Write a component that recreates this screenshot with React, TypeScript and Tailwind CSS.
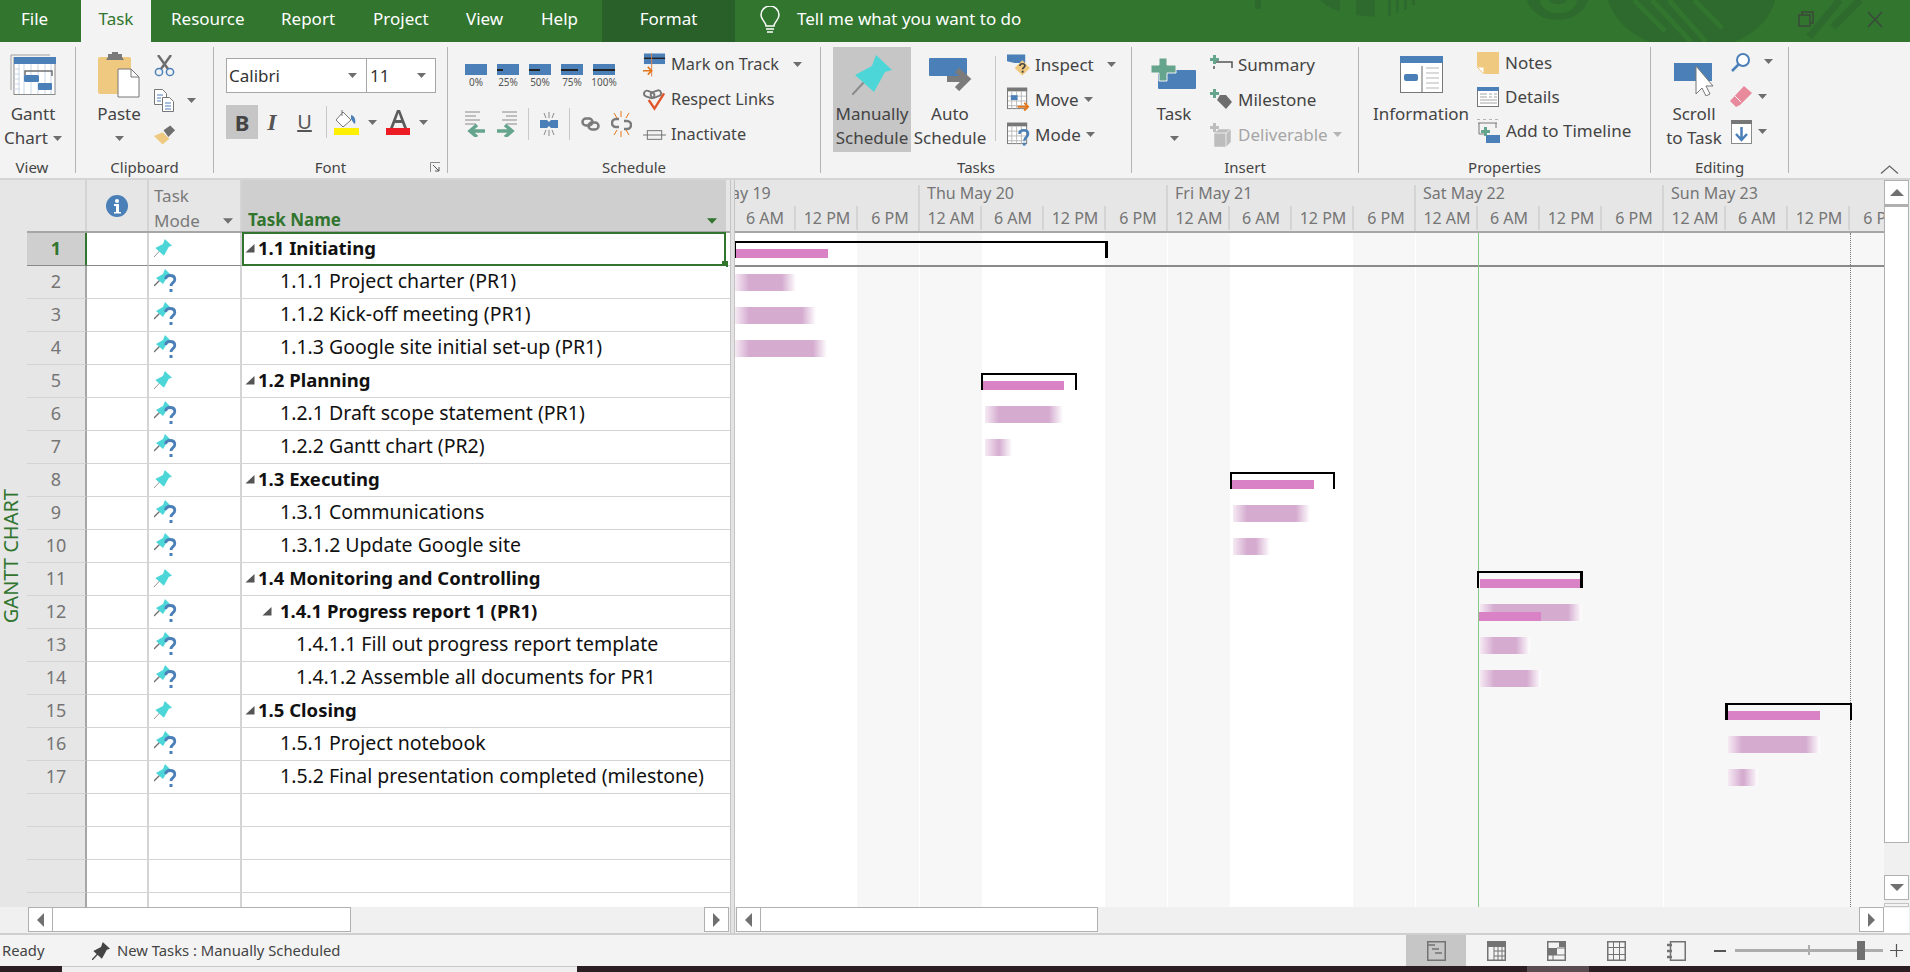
import React from 'react'

const BLUE = '#4b7fb8'
const TEAL = '#4cd6d8'
const GRAY = '#737373'
const TAN = '#efc97f'
const SAGE = '#65a48d'
const ORANGE = '#e4761a'

const TABS = [
  { label: 'Resource', w: 'w-[110px]' },
  { label: 'Report', w: 'w-[92px]' },
  { label: 'Project', w: 'w-[93px]' },
  { label: 'View', w: 'w-[75px]' },
  { label: 'Help', w: 'w-[81px]' },
]

const ROWS = [
  { id: 1, name: '1.1 Initiating', level: 1, summary: true },
  { id: 2, name: '1.1.1 Project charter (PR1)', level: 2 },
  { id: 3, name: '1.1.2 Kick-off meeting (PR1)', level: 2 },
  { id: 4, name: '1.1.3 Google site initial set-up (PR1)', level: 2 },
  { id: 5, name: '1.2 Planning', level: 1, summary: true },
  { id: 6, name: '1.2.1 Draft scope statement (PR1)', level: 2 },
  { id: 7, name: '1.2.2 Gantt chart (PR2)', level: 2 },
  { id: 8, name: '1.3 Executing', level: 1, summary: true },
  { id: 9, name: '1.3.1 Communications', level: 2 },
  { id: 10, name: '1.3.1.2 Update Google site', level: 2 },
  { id: 11, name: '1.4 Monitoring and Controlling', level: 1, summary: true },
  { id: 12, name: '1.4.1 Progress report 1 (PR1)', level: 2, summary: true },
  { id: 13, name: '1.4.1.1 Fill out progress report template', level: 3 },
  { id: 14, name: '1.4.1.2 Assemble all documents for PR1', level: 3 },
  { id: 15, name: '1.5 Closing', level: 1, summary: true },
  { id: 16, name: '1.5.1 Project notebook', level: 2 },
  { id: 17, name: '1.5.2 Final presentation completed (milestone)', level: 2 },
]

const DAYS = [
  { label: 'Wed May 19', work: [false, true, true, false] },
  { label: 'Thu May 20', work: [false, true, true, false] },
  { label: 'Fri May 21', work: [false, true, true, false] },
  { label: 'Sat May 22', work: [false, false, false, false] },
  { label: 'Sun May 23', work: [false, false, false, false] },
]
const SLOTS = ['12 AM', '6 AM', '12 PM', '6 PM']

// x values are page pixels, row is the task row the bar sits on
const BRACKETS = [
  { row: 0, x1: 735, x2: 1108, l: 1, r: 3 },
  { row: 4, x1: 981, x2: 1077, l: 2, r: 2 },
  { row: 7, x1: 1230, x2: 1335, l: 2, r: 2 },
  { row: 10, x1: 1477, x2: 1583, l: 2, r: 3 },
  { row: 14, x1: 1725, x2: 1852, l: 3, r: 2 },
]
const SOLID = [
  { row: 0, x1: 735, x2: 828 },
  { row: 4, x1: 983, x2: 1064 },
  { row: 7, x1: 1231, x2: 1314 },
  { row: 10, x1: 1480, x2: 1580 },
  { row: 14, x1: 1728, x2: 1820 },
]
const SOFT = [
  { row: 1, x1: 735, x2: 796 },
  { row: 2, x1: 735, x2: 816 },
  { row: 3, x1: 735, x2: 827 },
  { row: 5, x1: 985, x2: 1063 },
  { row: 6, x1: 985, x2: 1012 },
  { row: 8, x1: 1233, x2: 1310 },
  { row: 9, x1: 1233, x2: 1270 },
  { row: 11, x1: 1480, x2: 1582 },
  { row: 12, x1: 1480, x2: 1530 },
  { row: 13, x1: 1480, x2: 1541 },
  { row: 15, x1: 1728, x2: 1820 },
  { row: 16, x1: 1728, x2: 1758 },
]

const Arrow = ({ color = '#6e6e6e', className = '' }: { color?: string; className?: string }) => (
  <svg width="9" height="5" viewBox="0 0 9 5" className={className}>
    <path d="M0 0h9L4.500 5z" fill={color} />
  </svg>
)

const PinIcon = ({ size = 40 }: { size?: number }) => (
  <svg width={size} height={size} viewBox="0 0 40 40">
    <path d="M0 40 13 26" stroke="#8a8a8a" strokeWidth="2" fill="none" />
    <path d="M24 0 40 15 33 17 22 37 3 20 20 11z" fill={TEAL} />
  </svg>
)

const PinQuestion = () => (
  <svg width="23" height="24" viewBox="0 0 23 24">
    <path d="M0 17 6 11" stroke="#6f6f6f" strokeWidth="1.300" fill="none" />
    <path d="M11 0 17 6 14 7 9 15 2 9 9 5z" fill={TEAL} />
    <path d="M11.500 10c.5-2.500 2.500-3.500 4.500-3.500 3 0 4.800 1.600 4.800 4 0 3-3.800 3.300-3.800 6.500" stroke={BLUE} strokeWidth="2.800" fill="none" />
    <rect x="15.500" y="20" width="3" height="3" fill={BLUE} />
  </svg>
)

const GanttIcon = () => (
  <svg width="46" height="41" viewBox="0 0 46 41">
    <path d="M1 36V1h39" stroke="#a0a0a0" fill="none" />
    <rect x="4" y="3.500" width="41" height="37" fill="#fff" stroke="#8a8a8a" />
    <rect x="4" y="3" width="42" height="7" fill={BLUE} />
    <path d="M9 10v30M14 10v30M21 10v30M28 10v30M35 10v30M41 10v30M4 15h6M4 20h6M4 25h6M4 30h6M4 35h6" stroke="#c9d6e4" />
    <path d="M15 22v-5h27v5" stroke="#707070" strokeWidth="1.500" fill="none" />
    <rect x="14" y="21" width="15" height="7" rx="1.500" fill={BLUE} />
    <rect x="28" y="29" width="14" height="7" rx="1" fill={BLUE} />
  </svg>
)

const PasteIcon = () => (
  <svg width="42" height="46" viewBox="0 0 42 46">
    <rect x="0" y="5" width="33" height="37" rx="2" fill={TAN} />
    <path d="M10 5V2h4V0h6v2h4v3l2 3H8z" fill="#7a7a7a" />
    <path d="M20 17h13l8 8v20H20z" fill="#fff" stroke="#777" />
    <path d="M33 17v8h8" fill="none" stroke="#777" />
  </svg>
)

const ScissorsIcon = () => (
  <svg width="21" height="22" viewBox="0 0 21 22">
    <path d="M4 0 14 14M17 0 7 14" stroke="#6e6e6e" strokeWidth="2.500" fill="none" />
    <circle cx="5" cy="17" r="3.600" fill="none" stroke={BLUE} strokeWidth="1.500" />
    <circle cx="16" cy="17" r="3.600" fill="none" stroke={BLUE} strokeWidth="1.500" />
  </svg>
)

const CopyIcon = () => (
  <svg width="21" height="23" viewBox="0 0 21 23">
    <path d="M.5.5h8l4 4v11H.5z" fill="#fff" stroke="#777" />
    <path d="M8.500 8.500h7l4 4v10h-11z" fill="#fff" stroke="#777" />
    <path d="M3 6h6M3 9h4M3 12h4M11 14h6M11 17h6M11 20h6" stroke={BLUE} />
  </svg>
)

const BrushIcon = () => (
  <svg width="24" height="21" viewBox="0 0 24 21">
    <path d="M10 7 17 14 10 20 1 11z" fill={TAN} />
    <path d="M11 5 18 0 23 5 16 12z" fill="#6e6e6e" />
  </svg>
)

const FillIcon = () => (
  <svg width="25" height="26" viewBox="0 0 25 26">
    <path d="M9 3 17 11 9 18 2 11z" fill="#fff" stroke="#777" />
    <path d="M8 1v6" stroke="#777" />
    <path d="M17 6c4 1 5 5 4 9-2-1-3-4-4-5z" fill={BLUE} />
    <rect x="0" y="19" width="25" height="7" fill="#ffef00" />
  </svg>
)

const FontColorIcon = () => (
  <svg width="25" height="26" viewBox="0 0 25 26">
    <path d="M4 19 11 1h3l7 18h-3l-2-5H9l-2 5zM10 11h5l-2.500-7z" fill="#5c5c5c" fillRule="evenodd" />
    <rect x="0" y="19" width="24" height="7" fill="#ed1c24" />
  </svg>
)

const PercentBar = ({ fill, label }: { fill: number; label: string }) => (
  <div className="flex w-[22px] flex-col items-center">
    <div className="flex h-[11px] w-[22px] items-center bg-[#4b7fb8]">
      {fill > 0 && <div className="h-[2px] bg-[#222]" style={{ width: fill * 22 }} />}
    </div>
    <span className="mt-[1px] whitespace-nowrap text-[10px] leading-[12px] text-[#555]">{label}</span>
  </div>
)

const OutdentIcon = ({ flip }: { flip?: boolean }) => (
  <svg width="22" height="26" viewBox="0 0 22 26" style={flip ? { transform: 'scaleX(-1)' } : undefined}>
    <path d="M0 1h15M0 5h11M0 9h15M0 13h11" stroke="#8a8a8a" />
    <path d="M20 20H7M12 14l-7 6 7 6" stroke={SAGE} strokeWidth="3.500" fill="none" />
  </svg>
)

const SplitIcon = () => (
  <svg width="18" height="24" viewBox="0 0 18 24">
    <path d="M0 8h7l2 2 2-2h7v8h-7l-2-2-2 2H0z" fill={BLUE} />
    <path d="M9 0v6M4 1l2 5M14 1l-2 5M9 18v6M4 23l2-5M14 23l-2-5" stroke="#8a8a8a" />
  </svg>
)

const LinkIcon = () => (
  <svg width="19" height="14" viewBox="0 0 19 14">
    <rect x="1.500" y="1.500" width="10" height="7" rx="3.500" fill="none" stroke="#7b7b7b" strokeWidth="2.500" />
    <rect x="7.500" y="5.500" width="10" height="7" rx="3.500" fill="none" stroke="#7b7b7b" strokeWidth="2.500" />
  </svg>
)

const UnlinkIcon = () => (
  <svg width="21" height="26" viewBox="0 0 21 26">
    <path d="M8 8H5a4 4 0 0 0 0 8h3M13 10h3a4 4 0 0 1 0 8h-3" stroke="#7b7b7b" strokeWidth="2.500" fill="none" />
    <path d="M10 0v6M3 2l3 5M18 2l-3 5M10 20v6M3 24l3-5M18 24l-3-5" stroke={ORANGE} />
  </svg>
)

const MarkTrackIcon = () => (
  <svg width="24" height="24" viewBox="0 0 24 24">
    <rect x="1" y="0" width="22" height="11" fill={BLUE} />
    <path d="M1 5h22" stroke="#222" strokeWidth="1.500" />
    <path d="M9 0v24" stroke="#d98050" />
    <path d="M0 18h8M5 14l4 4-4 4" stroke={ORANGE} strokeWidth="1.800" fill="none" />
  </svg>
)

const RespectIcon = () => (
  <svg width="24" height="22" viewBox="0 0 24 22">
    <rect x="1" y="2" width="11" height="6" rx="3" fill="none" stroke="#777" strokeWidth="2" transform="rotate(20 6 5)" />
    <rect x="8" y="2" width="11" height="6" rx="3" fill="none" stroke="#777" strokeWidth="2" transform="rotate(-20 13 5)" />
    <path d="M6 11l6 9L22 4" stroke="#e0562c" strokeWidth="2.500" fill="none" />
  </svg>
)

const InactivateIcon = () => (
  <svg width="24" height="12" viewBox="0 0 24 12">
    <rect x="4.500" y="1.500" width="15" height="9" fill="none" stroke="#6e6e6e" />
    <path d="M0 6h24" stroke="#6e6e6e" />
  </svg>
)

const AutoIcon = () => (
  <svg width="43" height="33" viewBox="0 0 43 33">
    <rect x="0" y="0" width="38" height="18" rx="1" fill={BLUE} />
    <path d="M18 21h19M28 12l10 9-10 10" stroke="#7b7b7b" strokeWidth="6" fill="none" />
  </svg>
)

const InspectIcon = () => (
  <svg width="24" height="22" viewBox="0 0 24 22">
    <path d="M0 0h19v9H8L0 7z" fill={BLUE} />
    <path d="M16 6 24 14 16 22 8 14z" fill={TAN} />
    <path d="M13.500 12c0-1.500 1-2.300 2.600-2.300s2.600.8 2.600 2.200c0 1.700-2.400 1.800-2.400 3.600" stroke="#444" strokeWidth="1.800" fill="none" />
    <rect x="15.300" y="17" width="2" height="2" fill="#444" />
  </svg>
)

const CalIcon = ({ kind }: { kind: 'move' | 'mode' }) => (
  <svg width="24" height="25" viewBox="0 0 24 25">
    <rect x=".5" y="1" width="20" height="21" fill="#fff" stroke="#777" />
    <rect x="0" y="0" width="21" height="4" fill="#777" />
    <path d="M5 4v18M10 4v18M15 4v18M1 9h19M1 14h19M1 19h19" stroke="#b9b9b9" />
    {kind === 'move' ? (
      <>
        <rect x="4" y="8" width="7" height="5" fill={BLUE} />
        <path d="M11 20h11M18 16l4 4-4 4" stroke={ORANGE} strokeWidth="2" fill="none" />
      </>
    ) : (
      <>
        <path d="M13 12c0-2.500 2-4 4.500-4s4.500 1.500 4.500 4c0 3.200-4 3.500-4 7" stroke={BLUE} strokeWidth="2.600" fill="none" />
        <rect x="16.500" y="21" width="3" height="3" fill={BLUE} />
      </>
    )}
  </svg>
)

const TaskIcon = () => (
  <svg width="46" height="34" viewBox="0 0 46 34">
    <rect x="7" y="12" width="38" height="19" rx="1" fill={BLUE} />
    <path d="M8 0h8v7h9v8h-9v8H8v-8H0V7h8z" fill={SAGE} stroke="#f3f3f3" />
  </svg>
)

const SummaryIcon = () => (
  <svg width="23" height="20" viewBox="0 0 23 20">
    <path d="M3 0h3v3h3v3H6v3H3V6H0V3h3z" fill={SAGE} />
    <path d="M6 7h16v6M4 11v3" stroke="#555" strokeWidth="1.500" fill="none" />
  </svg>
)

const MilestoneIcon = () => (
  <svg width="23" height="22" viewBox="0 0 23 22">
    <path d="M10 6h6l6 7-6 7-9-9z" fill="#6e6e6e" />
    <path d="M3 0h3v3h3v3H6v3H3V6H0V3h3z" fill={SAGE} />
  </svg>
)

const DeliverableIcon = () => (
  <svg width="23" height="24" viewBox="0 0 23 24">
    <path d="M4 10h12v14H4zM16 10l5-4v13l-5 5zM4 10l5-4h12l-5 4z" fill="#bdbdbd" stroke="#f3f3f3" strokeWidth=".5" />
    <path d="M3 0h3v3h3v3H6v3H3V6H0V3h3z" fill="#bdbdbd" />
  </svg>
)

const InfoPanelIcon = () => (
  <svg width="43" height="37" viewBox="0 0 43 37">
    <rect x=".5" y=".5" width="42" height="36" fill="#fff" stroke="#777" />
    <rect x="0" y="0" width="43" height="7" fill={BLUE} />
    <rect x="4" y="18" width="14" height="7" rx="2" fill={BLUE} />
    <path d="M22 10v26" stroke="#666" />
    <path d="M26 12h13M26 17h13M26 22h13M26 27h13M26 32h13" stroke="#b5b5b5" />
  </svg>
)

const NotesIcon = () => (
  <svg width="22" height="22" viewBox="0 0 22 22">
    <path d="M0 0h22v22H8l-8-8z" fill={TAN} />
    <path d="M0 15h7v7z" fill="#fff" stroke={TAN} />
  </svg>
)

const DetailsIcon = () => (
  <svg width="22" height="20" viewBox="0 0 22 20">
    <rect x=".5" y=".5" width="21" height="19" fill="#fff" stroke="#777" />
    <rect x="0" y="0" width="22" height="4" fill={BLUE} />
    <path d="M3 7h7M12 7h3M17 7h3M3 10h7M12 10h3M17 10h3M3 13h17M3 16h17" stroke="#a5a5a5" />
  </svg>
)

const TimelineIcon = () => (
  <svg width="23" height="24" viewBox="0 0 23 24">
    <path d="M0 0h3M6 0h3M12 0h3M18 0h3M1 4h19M2 4v11h8M19 4v5" stroke="#777" fill="none" />
    <rect x="9" y="16" width="14" height="8" fill={BLUE} />
    <path d="M7 8h3v3h3v3h-3v3H7v-3H4v-3h3z" fill={SAGE} />
  </svg>
)

const ScrollTaskIcon = () => (
  <svg width="40" height="42" viewBox="0 0 40 42">
    <rect x="0" y="9" width="38" height="18" fill={BLUE} />
    <path d="M22 12v28l6-6 4 8 4-2-4-8h7z" fill="#fff" stroke="#777" />
  </svg>
)

const SearchIcon = () => (
  <svg width="20" height="20" viewBox="0 0 20 20">
    <circle cx="12" cy="8" r="6" fill="#fff" stroke={BLUE} strokeWidth="2" />
    <path d="M7.500 12.500 1 19" stroke={BLUE} strokeWidth="2.500" />
  </svg>
)

const EraserIcon = () => (
  <svg width="22" height="21" viewBox="0 0 22 21">
    <path d="M14 0 22 7 10 19 6 21 0 15z" fill="#e88a9c" />
    <path d="M5 10 11 16" stroke="#f3f3f3" />
  </svg>
)

const FillDownIcon = () => (
  <svg width="21" height="24" viewBox="0 0 21 24">
    <rect x=".5" y=".5" width="20" height="23" fill="#fff" stroke="#8a8a8a" />
    <rect x="0" y="0" width="21" height="4" fill="#777" />
    <path d="M10.500 7v13M5 14l5.500 6 5.500-6" stroke={BLUE} strokeWidth="2.500" fill="none" />
  </svg>
)

const Sep = () => <div className="h-[126px] w-px shrink-0 bg-[#b4b4b4]" />

const BigButton = ({
  w,
  icon,
  lines,
  arrow,
  active,
  className = '',
}: {
  w: string
  icon: React.ReactNode
  lines: string[]
  arrow?: boolean
  active?: boolean
  className?: string
}) => (
  <div className={`flex h-[105px] shrink-0 flex-col items-center ${w} ${active ? 'bg-[#c6c6c6]' : ''} ${className}`}>
    <div className="flex h-[55px] items-center justify-center">{icon}</div>
    {lines.map((line) => (
      <div key={line} className="flex h-[24px] items-center gap-[5px] whitespace-nowrap leading-[24px]">
        {line}
        {arrow && line === lines[lines.length - 1] && lines.length > 1 && <Arrow />}
      </div>
    ))}
    {arrow && lines.length === 1 && (
      <div className="flex h-[24px] items-center">
        <Arrow />
      </div>
    )}
  </div>
)

const SmallRow = ({
  icon,
  label,
  arrow,
  muted,
  gap = 'gap-[5px]',
  iconW = 'w-[23px]',
}: {
  icon: React.ReactNode
  label?: string
  arrow?: 'tail' | 'end'
  muted?: boolean
  gap?: string
  iconW?: string
}) => (
  <div className={`flex h-[35px] items-center whitespace-nowrap ${gap} ${muted ? 'text-[#a6a6a6]' : ''}`}>
    <div className={`flex shrink-0 items-center justify-center ${iconW}`}>{icon}</div>
    {label}
    {arrow === 'tail' && <Arrow color={muted ? '#b5b5b5' : '#6e6e6e'} />}
    {arrow === 'end' && <Arrow className="ml-auto" />}
  </div>
)

const Group = ({
  w,
  label,
  children,
  launcher,
  labelClass = '',
}: {
  w: string
  label: string
  children: React.ReactNode
  launcher?: boolean
  labelClass?: string
}) => (
  <div className={`flex shrink-0 flex-col ${w}`}>
    <div className="flex h-[112px]">{children}</div>
    <div className={`relative flex h-[17px] items-center justify-center text-[15px] leading-[17px] ${labelClass}`}>
      {label}
      {launcher && (
        <svg width="11" height="11" viewBox="0 0 11 11" className="absolute right-[6px] top-[3px]">
          <path d="M.5 10V.5H10" stroke="#8a8a8a" fill="none" />
          <path d="M3 3l6 6M9 5v4H5" stroke="#555" fill="none" />
        </svg>
      )}
    </div>
  </div>
)

const TitleBar = () => (
  <div className="relative flex h-[42px] shrink-0 items-center bg-[#31752f] text-[17px] text-white">
    <svg className="absolute right-0 top-0" width="710" height="42" viewBox="1200 0 710 42">
      <g fill="#2e6a2d">
        <rect x="1255" y="0" width="6" height="9" />
        <path d="M1320 0h20v11c-8-2-15-6-20-11z" />
        <path d="M1356 0h19v17l-19-2z" />
        <rect x="1388" y="0" width="3" height="16" />
        <rect x="1396" y="0" width="2.500" height="13" />
        <rect x="1404" y="0" width="3" height="10" />
        <rect x="1412" y="0" width="3" height="5" />
        <path d="M1527 0a31 24 0 0 0 61 0h-11a18 13 0 0 1-37 0z" />
        <path d="M1549 0a9 4 0 0 0 18 0z" />
        <path d="M1608 0c6 20 22 34 42 42h84c20-8 36-22 41-42z" />
      </g>
      <g stroke="#31752f" strokeWidth="5" fill="none">
        <path d="M1634 0l31 31M1652 0l39 42M1669 0l37 42M1694 0l28 28" />
      </g>
      <path d="M1840 0l-31 37M1860 0l-27 27" stroke="#2e6a2d" strokeWidth="7" fill="none" />
      <g stroke="#3b4a3a" strokeWidth="1.500" fill="none">
        <rect x="1799" y="15" width="11" height="11" />
        <path d="M1802 15v-3h11v11h-3" />
        <path d="M1868 12l14 15M1882 12l-14 15" />
      </g>
    </svg>
    <div className="relative flex h-full items-center">
      <div className="w-[81px] pb-[5px] pl-[21px]">File</div>
      <div className="flex h-full w-[70px] items-center justify-center bg-[#f3f3f3] pb-[5px] text-[#31752f]">Task</div>
      {TABS.map((tab) => (
        <div key={tab.label} className={`${tab.w} pb-[5px] pl-[20px]`}>{tab.label}</div>
      ))}
      <div className="flex h-full w-[133px] items-center justify-center bg-[#29602a] pb-[5px]">Format</div>
      <svg width="20" height="30" viewBox="0 0 20 30" className="ml-[25px]">
        <path d="M6 20c0-4-5-6-5-11a9 9 0 0 1 18 0c0 5-5 7-5 11z" fill="none" stroke="#fff" strokeWidth="1.500" />
        <path d="M6 23h8M7 26h6" stroke="#fff" strokeWidth="1.500" />
      </svg>
      <div className="ml-[17px] pb-[5px]">Tell me what you want to do</div>
    </div>
  </div>
)

const Ribbon = () => (
  <div className="flex h-[138px] shrink-0 items-start border-b-2 border-[#d4d4d4] bg-[#f3f3f3] pt-[5px] text-[17px] text-[#444]">
    <Group w="w-[75px]" label="View" labelClass="pr-[11px]">
      <BigButton w="w-[66px]" icon={<GanttIcon />} lines={['Gantt', 'Chart']} arrow />
    </Group>
    <Sep />
    <Group w="w-[137px]" label="Clipboard">
      <BigButton w="w-[62px]" className="ml-[12px]" icon={<PasteIcon />} lines={['Paste']} arrow />
      <div className="ml-[3px] flex w-[50px] flex-col pt-[1px]">
        <SmallRow icon={<ScissorsIcon />} />
        <SmallRow icon={<CopyIcon />} arrow="tail" gap="gap-[11px]" />
        <SmallRow icon={<BrushIcon />} />
      </div>
    </Group>
    <Sep />
    <Group w="w-[233px]" label="Font" launcher>
      <div className="flex flex-col pl-[12px] pt-[11px]">
        <div className="flex h-[35px]">
          <div className="flex w-[141px] items-center justify-between border border-[#a6a6a6] bg-white pl-[2px] pr-[9px] text-[#333]">
            Calibri
            <Arrow />
          </div>
          <div className="flex w-[69px] items-center justify-between border border-l-0 border-[#a6a6a6] bg-white pl-[3px] pr-[9px] text-[#333]">
            11
            <Arrow />
          </div>
        </div>
        <div className="mt-[12px] flex h-[34px] items-center">
          <div className="flex h-full w-[32px] items-center justify-center bg-[#c6c6c6] text-[22px] font-bold leading-none text-[#444]">B</div>
          <div className="w-[28px] text-center font-['Liberation_Serif',serif] text-[24px] font-bold italic leading-none text-[#555]">I</div>
          <div className="w-[37px] text-center text-[20px] leading-none text-[#555] underline">U</div>
          <div className="ml-[3px] h-[32px] w-px bg-[#c8c8c8]" />
          <div className="ml-[7px]"><FillIcon /></div>
          <Arrow className="ml-[9px]" />
          <div className="ml-[9px]"><FontColorIcon /></div>
          <Arrow className="ml-[8px]" />
        </div>
      </div>
    </Group>
    <Sep />
    <Group w="w-[372px]" label="Schedule">
      <div className="flex w-[195px] shrink-0 flex-col pl-[17px] pt-[17px]">
        <div className="flex h-[36px] gap-[10px]">
          <PercentBar fill={0} label="0%" />
          <PercentBar fill={0.25} label="25%" />
          <PercentBar fill={0.5} label="50%" />
          <PercentBar fill={0.75} label="75%" />
          <PercentBar fill={1} label="100%" />
        </div>
        <div className="mt-[8px] flex items-center">
          <OutdentIcon />
          <div className="ml-[8px]"><OutdentIcon flip /></div>
          <div className="mx-[11px] h-[32px] w-px bg-[#c8c8c8]" />
          <SplitIcon />
          <div className="mx-[11px] h-[32px] w-px bg-[#c8c8c8]" />
          <LinkIcon />
          <div className="ml-[11px]"><UnlinkIcon /></div>
        </div>
      </div>
      <div className="flex w-[172px] flex-col pr-[13px] text-[16.3px]">
        <SmallRow icon={<MarkTrackIcon />} label="Mark on Track" arrow="end" />
        <SmallRow icon={<RespectIcon />} label="Respect Links" />
        <SmallRow icon={<InactivateIcon />} label="Inactivate" />
      </div>
    </Group>
    <Sep />
    <Group w="w-[310px]" label="Tasks">
      <BigButton w="w-[78px]" className="ml-[12px]" icon={<PinIcon />} lines={['Manually', 'Schedule']} active />
      <BigButton w="w-[78px]" icon={<AutoIcon />} lines={['Auto', 'Schedule']} />
      <div className="ml-[6px] mt-[9px] h-[85px] w-px bg-[#c8c8c8]" />
      <div className="ml-[11px] flex w-[112px] flex-col pr-[3px]">
        <SmallRow icon={<InspectIcon />} label="Inspect" arrow="end" />
        <SmallRow icon={<CalIcon kind="move" />} label="Move" arrow="tail" />
        <SmallRow icon={<CalIcon kind="mode" />} label="Mode" arrow="tail" />
      </div>
    </Group>
    <Sep />
    <Group w="w-[226px]" label="Insert">
      <BigButton w="w-[60px]" className="ml-[12px]" icon={<TaskIcon />} lines={['Task']} arrow />
      <div className="ml-[6px] flex flex-col">
        <SmallRow icon={<SummaryIcon />} label="Summary" />
        <SmallRow icon={<MilestoneIcon />} label="Milestone" />
        <SmallRow icon={<DeliverableIcon />} label="Deliverable" arrow="tail" muted />
      </div>
    </Group>
    <Sep />
    <Group w="w-[291px]" label="Properties">
      <BigButton w="w-[110px]" className="ml-[7px]" icon={<InfoPanelIcon />} lines={['Information']} />
      <div className="-mt-[2px] ml-[1px] flex flex-col">
        <div className="flex h-[35px] items-center gap-[6px] pt-[1px]"><NotesIcon />Notes</div>
        <div className="flex h-[34px] items-center gap-[6px]"><DetailsIcon />Details</div>
        <div className="flex h-[34px] items-center gap-[6px] whitespace-nowrap"><TimelineIcon />Add to Timeline</div>
      </div>
    </Group>
    <Sep />
    <Group w="w-[137px]" label="Editing">
      <BigButton w="w-[72px]" className="ml-[7px]" icon={<ScrollTaskIcon />} lines={['Scroll', 'to Task']} />
      <div className="-mt-[3px] flex flex-col">
        <SmallRow icon={<SearchIcon />} arrow="tail" iconW="w-[22px]" gap="gap-[12px]" />
        <SmallRow icon={<EraserIcon />} arrow="tail" iconW="w-[22px]" gap="gap-[6px]" />
        <SmallRow icon={<FillDownIcon />} arrow="tail" iconW="w-[22px]" gap="gap-[6px]" />
      </div>
    </Group>
    <Sep />
    <div className="flex h-[130px] flex-1 items-end justify-end pb-[3px] pr-[11px]">
      <svg width="19" height="9" viewBox="0 0 19 9">
        <path d="M1 8.500 9.500 1 18 8.500" stroke="#666" strokeWidth="1.300" fill="none" />
      </svg>
    </div>
  </div>
)

const Triangle = () => (
  <svg width="10" height="10" viewBox="0 0 10 10" className="shrink-0">
    <path d="M9.500 1v8.500H.5z" fill="#555" />
  </svg>
)

const TaskRow = ({ id, name, level, summary }: { id?: number; name?: string; level?: number; summary?: boolean }) => {
  const selected = id === 1
  let pad = ''
  if (level === 1) pad = selected ? 'gap-[3px] pl-[1px]' : 'gap-[3px] pl-[3px]'
  if (level === 2) pad = summary ? 'gap-[8px] pl-[20px]' : 'pl-[38px]'
  if (level === 3) pad = 'pl-[54px]'
  return (
    <div className="flex h-[33px] shrink-0">
      <div
        className={`flex w-[60px] shrink-0 items-center justify-center border-b border-r-2 pb-[2px] text-[18px] ${
          selected ? 'border-b-[#8a8a8a] border-r-[#31752f] bg-[#cfcfcf] font-bold text-[#31752f]' : 'border-b-[#d4d4d4] border-r-[#a6a6a6] text-[#757575]'
        }`}
      >
        {id}
      </div>
      <div className={`w-[62px] shrink-0 border-b border-r-2 border-r-[#d4d4d4] bg-white ${selected ? 'border-b-[#8a8a8a]' : 'border-b-[#d4d4d4]'}`} />
      <div className={`flex w-[93px] shrink-0 items-center border-b border-r-2 border-r-[#d4d4d4] bg-white pb-[2px] pl-[5px] ${selected ? 'border-b-[#8a8a8a]' : 'border-b-[#d4d4d4]'}`}>
        {id !== undefined && (level === 1 ? <PinIcon size={18} /> : <PinQuestion />)}
      </div>
      <div
        className={`relative flex w-[484px] shrink-0 items-center whitespace-nowrap bg-white pb-[2px] text-[#111] ${pad} ${
          selected ? '-mt-px h-[34px] border-2 border-[#31752f]' : 'border-b border-b-[#d4d4d4]'
        } ${summary ? 'text-[18.5px] font-bold' : 'text-[19.5px]'}`}
      >
        {summary && <Triangle />}
        {name}
        {selected && <div className="absolute -bottom-[3px] -right-[4px] h-[6px] w-[6px] bg-[#31752f]" />}
      </div>
      <div className="w-[4px] shrink-0 border-b border-b-[#d4d4d4] bg-white" />
    </div>
  )
}

const ScrollButton = ({ dir }: { dir: 'left' | 'right' | 'up' | 'down' }) => {
  const path = { left: 'M9 0v14L2 7z', right: 'M2 0v14l7-7z', up: 'M0 9h14L7 2z', down: 'M0 2h14L7 9z' }[dir]
  const horizontal = dir === 'left' || dir === 'right'
  return (
    <div className="flex h-[25px] w-[25px] shrink-0 items-center justify-center border border-[#b0b0b0] bg-white">
      <svg width={horizontal ? 11 : 14} height={horizontal ? 14 : 11} viewBox={horizontal ? '0 0 11 14' : '0 0 14 11'}>
        <path d={path} fill="#707070" />
      </svg>
    </div>
  )
}

const TablePane = () => (
  <div className="flex w-[730px] shrink-0 flex-col bg-[#f0f0f0]">
    <div className="flex h-[727px] overflow-hidden">
      <div className="flex w-[27px] shrink-0 items-center bg-[#e6e6e6]">
        <span className="ml-px mt-[26px] rotate-180 whitespace-nowrap pl-[7px] text-[20px] leading-[19px] text-[#31752f] [writing-mode:vertical-rl]">GANTT CHART</span>
      </div>
      <div className="flex flex-1 flex-col overflow-hidden bg-[#e6e6e6]">
        <div className="flex h-[53px] shrink-0 border-b-2 border-[#a6a6a6] text-[17px]">
          <div className="w-[60px] shrink-0 border-r-2 border-[#d4d4d4]" />
          <div className="flex w-[62px] shrink-0 items-center justify-center border-r-2 border-[#d4d4d4]">
            <svg width="22" height="22" viewBox="0 0 22 22">
              <circle cx="11" cy="11" r="11" fill={BLUE} />
              <circle cx="11" cy="6" r="2" fill="#fff" />
              <path d="M8 9h5v8h2v1.500H8V17h2v-6H8z" fill="#fff" />
            </svg>
          </div>
          <div className="relative w-[93px] shrink-0 border-r-2 border-[#d4d4d4] pl-[5px] pt-[3px] leading-[25px] text-[#7a7a7a]">
            <div>Task</div>
            <div>Mode</div>
            <Arrow color="#707070" className="absolute bottom-[7px] right-[7px] h-[6px] w-[10px]" />
          </div>
          <div className="relative flex w-[484px] shrink-0 items-end bg-[#cfcfcf] pl-[6px] font-bold leading-[22px] text-[#31752f]">
            Task Name
            <Arrow color="#31752f" className="absolute bottom-[7px] right-[9px] h-[6px] w-[10px]" />
          </div>
          <div className="w-[4px] bg-[#e6e6e6]" />
        </div>
        {ROWS.map((row) => (
          <TaskRow key={row.id} {...row} />
        ))}
        <TaskRow />
        <TaskRow />
        <TaskRow />
        <TaskRow />
      </div>
    </div>
    <div className="flex h-[26px] items-start pl-[28px] pr-px">
      <ScrollButton dir="left" />
      <div className="h-[25px] w-[298px] border border-l-0 border-[#b0b0b0] bg-white" />
      <div className="ml-auto">
        <ScrollButton dir="right" />
      </div>
    </div>
  </div>
)

const Divider = () => <div className="w-[5px] shrink-0 border-x border-[#c4c4c4] bg-[#e3e3e3]" />

const ChartPane = () => (
  <div className="flex w-[1149px] shrink-0 flex-col bg-[#f0f0f0]">
    <div className="h-[53px] shrink-0 overflow-hidden border-b-2 border-[#a6a6a6] bg-[#e6e6e6] text-[16px] text-[#757575]">
      <div className="-ml-[63px] flex h-full w-[1240px]">
        {DAYS.map((day) => (
          <div key={day.label} className="relative flex w-[248px] shrink-0 flex-col pt-[1px]">
            <div className="absolute bottom-0 right-0 top-[5px] w-[2px] bg-[#d4d4d4]" />
            <div className="h-[25px] pl-[7px] leading-[25px]">{day.label}</div>
            <div className="flex">
              {SLOTS.map((slot) => (
                <div key={slot} className="flex h-[24px] w-[62px] items-center justify-center border-r-2 border-[#d4d4d4] pb-[1px] pl-[2px] last:border-r-0">{slot}</div>
              ))}
            </div>
          </div>
        ))}
      </div>
    </div>
    <div className="relative h-[674px] shrink-0 overflow-hidden bg-white">
      <div className="-ml-[63px] flex h-full w-[1240px]">
        {DAYS.map((day) => (
          <div key={day.label} className="flex w-[248px] shrink-0 border-r border-white">
            {day.work.map((on, i) => (
              <div key={i} className={`h-full flex-1 ${on ? 'bg-white' : 'bg-[#f7f7f7]'}`} />
            ))}
          </div>
        ))}
      </div>
      <div className="absolute inset-x-0 top-[32px] h-[2px] bg-[#8a8a8a]" />
      <div className="absolute inset-y-0 left-[743px] w-px bg-[#86c886]" />
      <div className="absolute inset-y-0 left-[1115px] border-l border-dotted border-[#777]" />
      {SOFT.map((b) => (
        <div
          key={b.row}
          className="absolute h-[17px] bg-[linear-gradient(90deg,#f6eaf4,#d5acd0_14px,#d5acd0_calc(100%-14px),#ffffff)]"
          style={{ left: b.x1 - 735, width: b.x2 - b.x1, top: b.row * 33 + 8 }}
        />
      ))}
      <div className="absolute left-[744px] top-[379px] h-[9px] w-[62px] bg-[#d983c6]" />
      {SOLID.map((b) => (
        <div
          key={b.row}
          className="absolute h-[9px] bg-[#d983c6]"
          style={{ left: b.x1 - 735, width: b.x2 - b.x1, top: b.row * 33 + 16 }}
        />
      ))}
      {BRACKETS.map((b) => (
        <div
          key={b.row}
          className="absolute h-[17px] border-t-2 border-black"
          style={{ left: b.x1 - 735, width: b.x2 - b.x1, top: b.row * 33 + 8, borderLeft: `${b.l}px solid #000`, borderRight: `${b.r}px solid #000` }}
        />
      ))}
    </div>
    <div className="flex h-[26px] items-start pl-px">
      <ScrollButton dir="left" />
      <div className="h-[25px] w-[337px] border border-l-0 border-[#b0b0b0] bg-white" />
      <div className="ml-auto">
        <ScrollButton dir="right" />
      </div>
    </div>
  </div>
)

const VerticalScroll = () => (
  <div className="flex w-[26px] shrink-0 flex-col bg-[#f0f0f0] pr-px">
    <ScrollButton dir="up" />
    <div className="h-[638px] w-[25px] border-x border-b border-t-2 border-[#b0b0b0] bg-white" />
    <div className="h-[32px]" />
    <ScrollButton dir="down" />
    <div className="mt-[3px] h-[4px] w-[25px] border border-[#c4c4c4] bg-[#f3f3f3]" />
    <div className="mt-[1px] flex-1 bg-white" />
  </div>
)

const ViewIcon = ({ kind }: { kind: number }) => (
  <svg width="19" height="20" viewBox="0 0 19 20">
    <rect x=".75" y=".75" width="17.500" height="18.500" fill="none" stroke={GRAY} strokeWidth="1.500" />
    {kind === 0 && <path d="M1 4h7M5 8h7M8 12h7" stroke={GRAY} strokeWidth="1.500" />}
    {kind === 1 && (
      <>
        <rect x="0" y="0" width="19" height="6" fill={GRAY} />
        <path d="M7 6v14M11 6v14M15 6v14M7 10h12M7 15h12" stroke={GRAY} />
      </>
    )}
    {kind === 2 && (
      <>
        <path d="M12 0h7v6h-7zM0 7h10v7H0z" fill={GRAY} />
        <path d="M0 14h19M6 14v6M10 7h9" stroke={GRAY} />
      </>
    )}
    {kind === 3 && <path d="M6.500 0v20M12.500 0v20M0 6.500h19M0 13.500h19" stroke={GRAY} />}
  </svg>
)

const NoteViewIcon = () => (
  <svg width="19" height="20" viewBox="0 0 19 20">
    <path d="M3.500.75H18.250v18.500H3.500z" fill="none" stroke={GRAY} strokeWidth="1.500" />
    <path d="M0 4h5M0 10h5M0 16h5" stroke={GRAY} strokeWidth="2.500" />
  </svg>
)

const StatusBar = () => (
  <div className="flex h-[33px] shrink-0 items-center border-t-2 border-[#cfcfcf] bg-[#f3f3f3] text-[14.8px] text-[#444]">
    <div className="w-[92px] pl-[2px]">Ready</div>
    <svg width="18" height="18" viewBox="0 0 40 40">
      <path d="M0 40 13 26" stroke="#444" strokeWidth="3" fill="none" />
      <path d="M24 0 40 15 33 17 22 37 3 20 20 11z" fill="#444" />
    </svg>
    <div className="ml-[7px]">New Tasks : Manually Scheduled</div>
    <div className="ml-auto flex h-full items-center">
      <div className="flex h-full w-[60px] items-center justify-center bg-[#c6c6c6]"><ViewIcon kind={0} /></div>
      <div className="flex h-full w-[60px] items-center justify-center"><ViewIcon kind={1} /></div>
      <div className="flex h-full w-[60px] items-center justify-center"><ViewIcon kind={2} /></div>
      <div className="flex h-full w-[60px] items-center justify-center"><ViewIcon kind={3} /></div>
      <div className="flex h-full w-[60px] items-center justify-center"><NoteViewIcon /></div>
      <div className="ml-[8px] h-[2px] w-[12px] bg-[#555]" />
      <div className="relative ml-[9px] h-[3px] w-[148px] bg-[#adadad]">
        <div className="absolute -top-[4px] left-[73px] h-[10px] w-[2px] bg-[#adadad]" />
        <div className="absolute -top-[8px] left-[122px] h-[19px] w-[8px] bg-[#707070]" />
      </div>
      <svg width="13" height="13" viewBox="0 0 13 13" className="ml-[7px] mr-[7px]">
        <path d="M0 6.500h13M6.500 0v13" stroke="#555" strokeWidth="1.200" />
      </svg>
    </div>
  </div>
)

const Taskbar = () => (
  <div className="flex h-[6px] shrink-0 bg-[#2b1f23]">
    <div className="ml-[62px] h-full w-[515px] border-t border-[#c8c8c8] bg-[#efefef]" />
    <div className="ml-[950px] h-full w-[62px] bg-[#5a4c50]" />
  </div>
)

export default function App() {
  return (
    <div className="flex h-[972px] w-[1910px] flex-col overflow-hidden bg-[#f3f3f3] font-['Noto_Sans',sans-serif]">
      <TitleBar />
      <Ribbon />
      <div className="flex h-[753px] shrink-0">
        <TablePane />
        <Divider />
        <ChartPane />
        <VerticalScroll />
      </div>
      <StatusBar />
      <Taskbar />
    </div>
  )
}
